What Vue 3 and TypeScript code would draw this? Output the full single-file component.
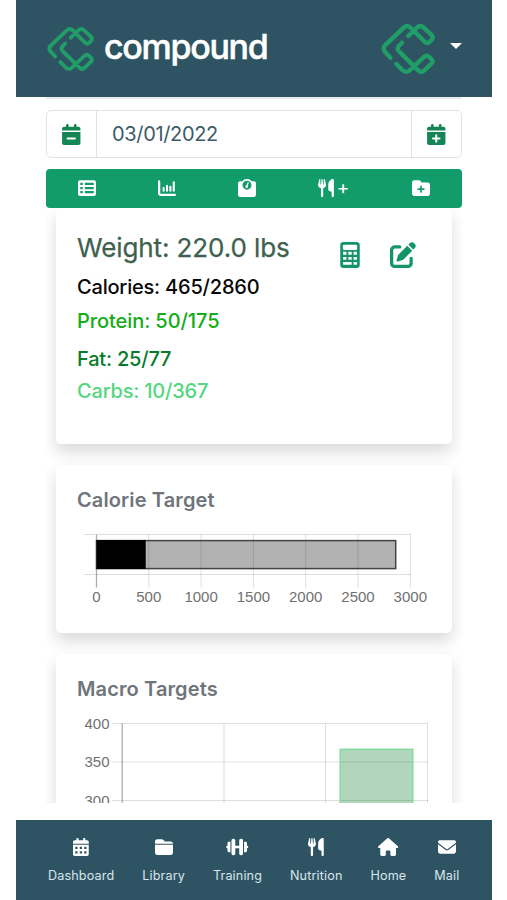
<script setup lang="ts">
interface Icon {
  box: string
  d: string
}

const calendarBody =
  'M128 0c17.7 0 32 14.3 32 32V64H288V32c0-17.7 14.3-32 32-32s32 14.3 32 32V64h48c26.5 0 48 21.5 48 48v48H0V112C0 85.5 21.5 64 48 64H96V32c0-17.7 14.3-32 32-32zM0 192H448V464c0 26.5-21.5 48-48 48H48c-26.5 0-48-21.5-48-48V192z'

const icons: Record<string, Icon> = {
  minus: {
    box: '0 0 448 512',
    d: calendarBody + 'M312 376c13.3 0 24-10.7 24-24s-10.7-24-24-24H136c-13.3 0-24 10.7-24 24s10.7 24 24 24H312z',
  },
  plus: {
    box: '0 0 448 512',
    d: calendarBody + 'M200 272v56h-56a24 24 0 0 0 0 48h56v56a24 24 0 0 0 48 0v-56h56a24 24 0 0 0 0-48h-56v-56a24 24 0 0 0-48 0z',
  },
  days: {
    box: '0 0 448 512',
    d: calendarBody + 'M64 248h64v64H64zM192 248h64v64h-64zM320 248h64v64h-64zM64 376h64v64H64zM192 376h64v64h-64zM320 376h64v64h-64z',
  },
  list: {
    box: '0 0 512 512',
    d: 'M64 32H448a64 64 0 0 1 64 64V416a64 64 0 0 1-64 64H64a64 64 0 0 1-64-64V96a64 64 0 0 1 64-64zM64 104h72v64H64zM192 104h256v64H192zM64 224h72v64H64zM192 224h256v64H192zM64 344h72v64H64zM192 344h256v64H192z',
  },
  bars: {
    box: '0 0 512 512',
    d: 'M32 32a32 32 0 0 1 32 32V400a16 16 0 0 0 16 16H480a32 32 0 0 1 0 64H80a80 80 0 0 1-80-80V64a32 32 0 0 1 32-32zM160 224a30 30 0 0 1 30 30v82a30 30 0 0 1-60 0v-82a30 30 0 0 1 30-30zM256 160a30 30 0 0 1 30 30v146a30 30 0 0 1-60 0V190a30 30 0 0 1 30-30zM352 192a30 30 0 0 1 30 30v114a30 30 0 0 1-60 0V222a30 30 0 0 1 30-30zM448 64a30 30 0 0 1 30 30v242a30 30 0 0 1-60 0V94a30 30 0 0 1 30-30z',
  },
  scale: {
    box: '0 0 512 512',
    d: 'M128 64C157 22 203 0 256 0s99 22 128 64h64a64 64 0 0 1 64 64V448a64 64 0 0 1-64 64H64a64 64 0 0 1-64-64V128a64 64 0 0 1 64-64zM256 48a128 128 0 1 0 0 256a128 128 0 1 0 0-256zM271 103a18 18 0 0 1 34 13l-29 73a38 38 0 1 1-34-13z',
  },
  utensils: {
    box: '0 0 448 512',
    d: 'M416 0C400 0 288 32 288 176V288c0 35.3 28.7 64 64 64h32V480c0 17.7 14.3 32 32 32s32-14.3 32-32V352 240 32c0-17.7-14.3-32-32-32zM64 16C64 7.8 57.9 1 49.7 .1S34.2 4.6 32.4 12.5L2.1 148.8C.7 155.1 0 161.5 0 167.9c0 45.9 35.1 83.6 80 87.7V480c0 17.7 14.3 32 32 32s32-14.3 32-32V255.6c44.9-4.1 80-41.8 80-87.7c0-6.4-.7-12.8-2.1-19.1L191.6 12.5c-1.8-8-9.3-13.3-17.4-12.4S160 7.8 160 16V150.2c0 5.4-4.4 9.8-9.8 9.8c-5.1 0-9.3-3.9-9.8-9L127.9 14.6C127.2 6.3 120.3 0 112 0s-15.2 6.3-15.9 14.6L83.7 151c-.5 5.1-4.7 9-9.8 9c-5.4 0-9.8-4.4-9.8-9.8V16z',
  },
  folderPlus: {
    box: '0 0 512 512',
    d: 'M64 480H448c35.3 0 64-28.7 64-64V160c0-35.3-28.7-64-64-64H288c-10.1 0-19.6-4.7-25.6-12.8L243.2 57.6C231.1 41.5 212.1 32 192 32H64C28.7 32 0 60.7 0 96V416c0 35.3 28.7 64 64 64zM232 208v56h-56a24 24 0 0 0 0 48h56v56a24 24 0 0 0 48 0v-56h56a24 24 0 0 0 0-48h-56v-56a24 24 0 0 0-48 0z',
  },
  folder: {
    box: '0 0 512 512',
    d: 'M448 480H64c-35.3 0-64-28.7-64-64V192H512V416c0 35.3-28.7 64-64 64zm64-320H0V96C0 60.7 28.7 32 64 32H192c20.1 0 39.1 9.5 51.2 25.6l19.2 25.6c6 8.1 15.5 12.8 25.6 12.8H448c35.3 0 64 28.7 64 64z',
  },
  dumbbell: {
    box: '0 0 640 512',
    d: 'M200 24h20a44 44 0 0 1 44 44V220H376V68a44 44 0 0 1 44-44h20a44 44 0 0 1 44 44V444a44 44 0 0 1-44 44h-20a44 44 0 0 1-44-44V292H264V444a44 44 0 0 1-44 44h-20a44 44 0 0 1-44-44V68a44 44 0 0 1 44-44zM126 106V406H84a42 42 0 0 1-42-42V292a36 36 0 0 1 0-72V148a42 42 0 0 1 42-42zM514 106h42a42 42 0 0 1 42 42v72a36 36 0 0 1 0 72v72a42 42 0 0 1-42 42h-42z',
  },
  house: {
    box: '0 0 576 512',
    d: 'M575.8 255.5c0 18-15 32.1-32 32.1h-32l.7 160.2c0 2.7-.2 5.4-.5 8.1V472c0 22.1-17.9 40-40 40H392c-22.1 0-40-17.9-40-40V384c0-17.7-14.3-32-32-32H256c-17.7 0-32 14.3-32 32v88c0 22.1-17.9 40-40 40H104c-22.1 0-40-17.9-40-40V287.6H32c-18 0-32-14-32-32.1c0-9 3-17 10-24L266.4 8c7-7 15-8 22-8s15 2 21 7L564.8 231.5c8 7 12 15 11 24z',
  },
  mail: {
    box: '0 0 512 512',
    d: 'M48 64C21.5 64 0 85.5 0 112c0 15.1 7.1 29.3 19.2 38.4L236.8 313.6c11.4 8.5 27 8.5 38.4 0L492.8 150.4c12.1-9.1 19.2-23.3 19.2-38.4c0-26.5-21.5-48-48-48H48zM0 176V384c0 35.3 28.7 64 64 64H448c35.3 0 64-28.7 64-64V176L294.4 339.2c-22.8 17.1-54 17.1-76.8 0L0 176z',
  },
  calculator: {
    box: '0 0 384 512',
    d: 'M64 0H320a64 64 0 0 1 64 64V448a64 64 0 0 1-64 64H64a64 64 0 0 1-64-64V64a64 64 0 0 1 64-64zM76 52a24 24 0 0 0-24 24v56a24 24 0 0 0 24 24H308a24 24 0 0 0 24-24V76a24 24 0 0 0-24-24zM56 194h66v56H56zM159 194h66v56h-66zM262 194h66v56h-66zM56 294h66v56H56zM159 294h66v56h-66zM262 294h66v56h-66zM56 394h169v56H56zM262 394h66v56h-66z',
  },
  edit: {
    box: '0 0 512 512',
    d: 'M471.6 21.7c-21.9-21.9-57.3-21.9-79.2 0L362.3 51.7l97.9 97.9 30.1-30.1c21.9-21.9 21.9-57.3 0-79.2L471.6 21.7zm-299.2 220c-6.1 6.1-10.8 13.6-13.5 21.9l-29.6 88.8c-2.9 8.6-.6 18.1 5.8 24.6s15.9 8.7 24.6 5.8l88.8-29.6c8.2-2.7 15.7-7.4 21.9-13.5L437.7 172.3 339.7 74.3 172.4 241.7zM96 64C43 64 0 107 0 160V416c0 53 43 96 96 96H352c53 0 96-43 96-96V320c0-17.7-14.3-32-32-32s-32 14.3-32 32v96c0 17.7-14.3 32-32 32H96c-17.7 0-32-14.3-32-32V160c0-17.7 14.3-32 32-32h96c17.7 0 32-14.3 32-32s-14.3-32-32-32H96z',
  },
}

const mark =
  'M79 36L106 10Q115 2 124 10L147 31Q156 39 149 47L142 54Q135 60 128 53L86 11Q76 1 66 10L8 65Q2 72 8 82L25 101M60 56L51 65Q43 73 51 82L109 139Q118 148 127 139L148 119Q155 112 148 105L141 98Q134 92 127 98L82 140Q72 148 61 138L43 120'

const tools = ['list', 'bars', 'scale', 'utensils', 'folderPlus']

const nav = [
  { label: 'Dashboard', icon: 'days' },
  { label: 'Library', icon: 'folder' },
  { label: 'Training', icon: 'dumbbell' },
  { label: 'Nutrition', icon: 'utensils' },
  { label: 'Home', icon: 'house' },
  { label: 'Mail', icon: 'mail' },
]

const calorieTicks = [0, 500, 1000, 1500, 2000, 2500, 3000]
const calorieX = (v: number): number => 19.5 + v * 0.1046
const macroTicks = [400, 350, 300]
const macroY = (v: number): number => 12.5 + (400 - v) * 0.77
const macroColumns = [147, 248.5, 350.5]
</script>

<template>
  <div class="phone">
    <header class="top">
      <svg class="mark small" viewBox="-3 -3 162 156"><path :d="mark" /></svg>
      <span class="brand">compound</span>
      <svg class="mark" viewBox="-3 -3 162 156"><path :d="mark" /></svg>
      <i class="caret"></i>
    </header>

    <main class="scroll">
      <div class="edge"></div>
      <div class="date">
        <button class="step"><svg class="cal" :viewBox="icons.minus.box"><path :d="icons.minus.d" /></svg></button>
        <span class="value">03/01/2022</span>
        <button class="step"><svg class="cal" :viewBox="icons.plus.box"><path :d="icons.plus.d" /></svg></button>
      </div>

      <div class="tools">
        <span v-for="t in tools" :key="t" class="tool">
          <svg :viewBox="icons[t].box"><path :d="icons[t].d" /></svg>
          <b v-if="t === 'utensils'">+</b>
        </span>
      </div>

      <section class="card summary">
        <div class="stats">
          <div class="weight">Weight: 220.0 lbs</div>
          <div class="line calories">Calories: 465/2860</div>
          <div class="line protein">Protein: 50/175</div>
          <div class="line fat">Fat: 25/77</div>
          <div class="line carbs">Carbs: 10/367</div>
        </div>
        <svg class="calc" :viewBox="icons.calculator.box"><path :d="icons.calculator.d" /></svg>
        <svg class="edit" :viewBox="icons.edit.box"><path :d="icons.edit.d" /></svg>
      </section>

      <section class="card calorie">
        <h2>Calorie Target</h2>
        <svg class="chart" width="374" height="86" viewBox="0 0 374 86">
          <path class="grid" d="M7 12.5H334M7 52.5H334" />
          <path v-for="t in calorieTicks" :key="t" :class="t ? 'grid' : 'axis'" :d="`M${calorieX(t)} 12.5V65.5`" />
          <rect class="goal" x="19.5" y="18.6" width="299.2" height="28" />
          <rect x="19.5" y="18" width="49.2" height="29" />
          <text v-for="t in calorieTicks" :key="'l' + t" :x="calorieX(t)" y="79.7" text-anchor="middle">{{ t }}</text>
        </svg>
      </section>

      <section class="card macro">
        <h2>Macro Targets</h2>
        <svg class="chart" width="374" height="300" viewBox="0 0 374 300">
          <path v-for="t in macroTicks" :key="t" class="grid" :d="`M35 ${macroY(t)}H351`" />
          <path v-for="x in macroColumns" :key="x" class="grid" :d="`M${x} 12.5V300`" />
          <path class="axis" d="M45.2 12.5V300" />
          <rect class="carb" x="263.2" y="38.3" width="72.6" height="290" />
          <text v-for="t in macroTicks" :key="'l' + t" x="32.5" :y="macroY(t) + 5.4" text-anchor="end">{{ t }}</text>
        </svg>
      </section>
    </main>

    <nav class="bottom">
      <a v-for="n in nav" :key="n.label" class="item">
        <svg :viewBox="icons[n.icon].box"><path :d="icons[n.icon].d" /></svg>
        <span>{{ n.label }}</span>
      </a>
    </nav>
  </div>
</template>

<style>
body {
  margin: 0;
  background: #fff;
}
</style>

<style scoped>
.phone {
  box-sizing: border-box;
  width: 507px;
  height: 900px;
  padding: 0 15px 0 16px;
  display: flex;
  flex-direction: column;
  overflow: hidden;
  font-family: Inter, "Liberation Sans", sans-serif;
}
svg {
  display: block;
  flex: none;
  fill: currentColor;
  fill-rule: evenodd;
}
.top {
  box-sizing: border-box;
  height: 97px;
  flex: none;
  padding-left: 31px;
  background: #2e5463;
  display: flex;
  align-items: center;
}
.mark {
  width: 54px;
  height: 52px;
  margin-left: 112.5px;
  fill: none;
  stroke: #219e68;
  stroke-width: 13;
  stroke-linecap: round;
  stroke-linejoin: round;
}
.mark.small {
  width: 47px;
  height: 46px;
  margin-left: 0;
}
.brand {
  width: 164px;
  margin: -3px 0 0 10px;
  color: #fff;
  font-size: 34px;
  font-weight: 500;
  line-height: 44px;
  letter-spacing: -1.3px;
  -webkit-text-stroke: 0.5px #fff;
  white-space: nowrap;
}
.caret {
  margin: -6px 0 0 15px;
  border: 6px solid transparent;
  border-top-color: #fff;
  border-bottom: 0;
}
.scroll {
  height: 706px;
  flex: none;
  width: 416px;
  margin-left: 30px;
  overflow: hidden;
}
.edge {
  height: 2px;
  background: #e6eaeb;
  margin-bottom: 11px;
}
.date {
  box-sizing: border-box;
  height: 48px;
  border: 1.5px solid #dfe3e6;
  border-radius: 5px;
  display: flex;
}
.step {
  width: 49px;
  border: 0;
  padding: 0;
  background: none;
  color: #168554;
  display: flex;
  align-items: center;
  justify-content: center;
}
.cal {
  width: 18.5px;
  height: 21px;
}
.value {
  flex: 1;
  border: solid #dfe3e6;
  border-width: 0 1.5px;
  padding-left: 15px;
  font-size: 20px;
  line-height: 47px;
  color: #3d5b69;
  letter-spacing: -0.35px;
}
.tools {
  height: 39px;
  margin-top: 11px;
  border-radius: 4px;
  background: #129b6b;
  color: #fff;
  display: grid;
  grid-template-columns: 81px 80px 80px 92px 83px;
  position: relative;
}
.tool {
  display: flex;
  align-items: center;
  justify-content: center;
  padding-bottom: 2px;
}
.tool svg {
  width: 18px;
  height: 18px;
}
.tool b {
  font-weight: 400;
  font-size: 19px;
  line-height: 18px;
  margin: 0 0 0 2px;
}
.card {
  box-sizing: border-box;
  width: 396px;
  margin-left: 10px;
  padding-left: 21px;
  border-radius: 5px;
  background: #fff;
  box-shadow: 0 8px 16px rgba(0, 0, 0, 0.15);
}
.summary {
  height: 236px;
  display: flex;
  align-items: flex-start;
  color: #149568;
}
.stats {
  width: 263px;
  padding-top: 22px;
}
.weight {
  font-size: 26px;
  line-height: 36px;
  color: #3e604e;
  letter-spacing: -0.1px;
  -webkit-text-stroke: 0.25px #3e604e;
  white-space: nowrap;
}
.line {
  font-size: 20px;
  font-weight: 500;
  line-height: 32px;
  letter-spacing: -0.2px;
}
.calories {
  color: #080808;
  margin-top: 5px;
}
.protein {
  color: #12ad17;
  margin-top: 2px;
  letter-spacing: -0.08px;
}
.fat {
  color: #087b2b;
  margin-top: 6px;
}
.carbs {
  color: #55d67f;
}
.calc {
  width: 20px;
  height: 26px;
  margin-top: 34px;
}
.edit {
  width: 26px;
  height: 26px;
  margin: 34px 0 0 30px;
}
.calorie,
.macro {
  margin-top: 21px;
  padding-top: 21px;
}
.calorie {
  height: 168px;
}
.macro {
  height: 400px;
}
h2 {
  margin: 0;
  font-size: 20px;
  line-height: 28px;
  font-weight: 600;
  color: #70757b;
  letter-spacing: 0.12px;
}
.chart {
  margin-top: 8px;
  font-family: "Liberation Sans", sans-serif;
  font-size: 15px;
  fill: #707070;
}
.grid {
  stroke: rgba(0, 0, 0, 0.13);
}
.axis {
  stroke: rgba(0, 0, 0, 0.32);
  stroke-width: 1.3;
}
.chart rect {
  fill: #000;
}
.chart .goal {
  fill: rgba(0, 0, 0, 0.3);
  stroke: #424442;
  stroke-width: 1.5;
}
.chart .carb {
  fill: rgba(0, 120, 32, 0.3);
  stroke: #7edb9a;
  stroke-width: 1.4;
}
.bottom {
  box-sizing: border-box;
  height: 80px;
  margin-top: 17px;
  flex: none;
  padding: 18px 32.5px 0 32px;
  background: #2e5463;
  color: #fff;
  display: flex;
  justify-content: space-between;
}
.item {
  display: flex;
  flex-direction: column;
  align-items: center;
}
.item svg {
  height: 18px;
  width: auto;
}
.item span {
  margin-top: 11px;
  font-size: 12.6px;
  line-height: 18px;
  letter-spacing: 0.15px;
  color: #d9e5eb;
}
</style>
